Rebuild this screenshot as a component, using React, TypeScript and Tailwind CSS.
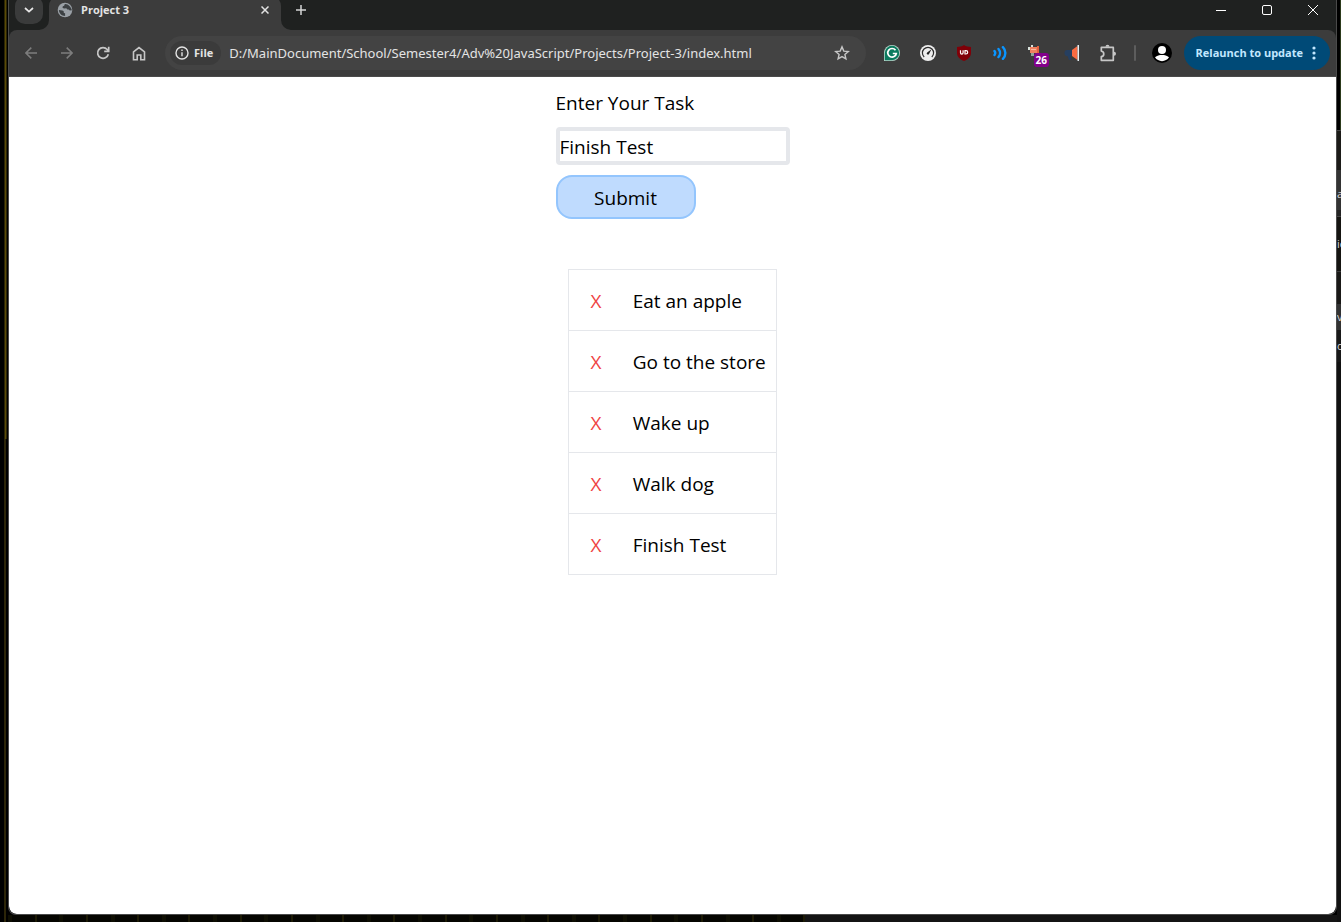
import React, { useState } from "react";
import type { FormEvent, ReactNode } from "react";

function ToolButton({ label, children }: { label: string; children: ReactNode }) {
  return (
    <button type="button" aria-label={label} className="flex h-9 w-9 shrink-0 items-center justify-center">
      {children}
    </button>
  );
}

function TabStrip() {
  return (
    <div className="-mt-1 flex h-[34px] items-start bg-[#1f2120] text-[#e3e3e3]">
      <button
        type="button"
        aria-label="Search tabs"
        className="ml-[6px] flex h-7 w-7 shrink-0 items-center justify-center rounded-[10px] bg-[#3a3b3b]"
      >
        <svg width="10" height="6" viewBox="0 0 10 6" fill="none" stroke="#e8e8e8" strokeWidth="1.7">
          <path d="M1 1l4 3.6L9 1" />
        </svg>
      </button>
      <div className="relative ml-[6px] h-[34px] w-[232px] shrink-0 rounded-t-[10px] bg-[#3c3c3c]">
        <svg className="absolute bottom-0 -left-[10px]" width="10" height="10" viewBox="0 0 10 10">
          <path d="M10 0v10H0A10 10 0 0 0 10 0z" fill="#3c3c3c" />
        </svg>
        <svg className="absolute bottom-0 -right-[10px]" width="10" height="10" viewBox="0 0 10 10">
          <path d="M0 0v10h10A10 10 0 0 1 0 0z" fill="#3c3c3c" />
        </svg>
        <div className="flex h-7 items-center pr-2 pl-2">
          <svg width="16" height="16" viewBox="0 0 16 16" className="shrink-0">
            <circle cx="8" cy="8" r="7.3" fill="#9aa0a6" />
            <path
              d="M1.9 8.1l3.4.3c1 .1 1.5.7 1.5 1.6v1l1.3.2v2.9C4.600 14 2 11.500 1.900 8.100zM8.300 1.900c-.8.400-1.200 1-1 1.800l-1.500.5-.3 1.600 1.500.6 2.300-.2 1.100 1.300 1.300.100 1.100 1 2.200-.3C14 4.800 11.600 2.100 8.300 1.900z"
              fill="#3c4043"
            />
          </svg>
          <span className="ml-2 flex-1 text-[11px] leading-4 font-bold">Project 3</span>
          <button type="button" aria-label="Close tab" className="flex h-4 w-4 items-center justify-center">
            <svg width="8" height="8" viewBox="0 0 8 8" stroke="#e3e3e3" strokeWidth="1.5">
              <path d="M.5.5l7 7M7.500.5l-7 7" />
            </svg>
          </button>
        </div>
      </div>
      <button type="button" aria-label="New tab" className="ml-[6px] flex h-7 w-7 items-center justify-center">
        <svg width="10" height="10" viewBox="0 0 10 10" stroke="#d5d5d5" strokeWidth="1.5">
          <path d="M5 0v10M0 5h10" />
        </svg>
      </button>
      <div className="ml-auto flex">
        <button type="button" aria-label="Minimize" className="flex h-7 w-[46px] items-center justify-center">
          <svg width="10" height="10" viewBox="0 0 10 10" stroke="#fff">
            <path d="M0 5.500h10" />
          </svg>
        </button>
        <button type="button" aria-label="Maximize" className="flex h-7 w-[46px] items-center justify-center">
          <svg width="10" height="10" viewBox="0 0 10 10" fill="none" stroke="#fff">
            <rect x=".5" y=".5" width="9" height="9" rx="1.500" />
          </svg>
        </button>
        <button type="button" aria-label="Close" className="flex h-7 w-[46px] items-center justify-center">
          <svg width="10" height="10" viewBox="0 0 10 10" stroke="#fff">
            <path d="M0 0l10 10M10 0L0 10" />
          </svg>
        </button>
      </div>
    </div>
  );
}

function Toolbar() {
  return (
    <div className="bg-[#1f2120]">
      <div className="flex h-[47px] items-center rounded-t-[8px] border-b border-[#4a4a4a] bg-[#3c3c3c] pr-[6px] pl-1">
        <ToolButton label="Back">
          <svg width="12" height="12" viewBox="0 0 12 12" fill="none" stroke="#7d7d7d" strokeWidth="1.500">
            <path d="M12 6H1M6.300.6L.9 6l5.400 5.400" />
          </svg>
        </ToolButton>
        <ToolButton label="Forward">
          <svg width="12" height="12" viewBox="0 0 12 12" fill="none" stroke="#7d7d7d" strokeWidth="1.500">
            <path d="M0 6h11M5.700.6L11.100 6l-5.400 5.400" />
          </svg>
        </ToolButton>
        <ToolButton label="Reload">
          <svg width="14" height="14" viewBox="0 0 14 14" fill="none" stroke="#c7c7c7" strokeWidth="1.700">
            <path d="M12.300 8.200A5.400 5.400 0 1 1 11.200 3.500L12.600 5M12.700.8v4.500H8.200" />
          </svg>
        </ToolButton>
        <ToolButton label="Home">
          <svg width="14" height="15" viewBox="0 0 14 15" fill="none" stroke="#c7c7c7" strokeWidth="1.600">
            <path d="M1.500 5.800L7 1.500l5.500 4.300v8H8.800V9H5.200v4.800H1.500z" />
          </svg>
        </ToolButton>
        <div className="ml-2 flex h-[34px] min-w-0 flex-1 items-center rounded-full bg-[#434343] pr-2 pl-[5px]">
          <button type="button" className="flex h-6 shrink-0 items-center rounded-full bg-[#3b3b3b] pr-2 pl-[5px] text-[#e3e3e3]">
            <svg width="14" height="14" viewBox="0 0 14 14" fill="none" stroke="#e3e3e3" strokeWidth="1.400">
              <circle cx="7" cy="7" r="6" />
              <path d="M7 6.200v4M7 3.600v1.500" />
            </svg>
            <span className="ml-[5px] text-[11px] leading-4 font-bold">File</span>
          </button>
          <input
            aria-label="Address"
            readOnly
            value="D:/MainDocument/School/Semester4/Adv%20JavaScript/Projects/Project-3/index.html"
            className="ml-2 h-6 min-w-0 flex-1 bg-transparent font-['Noto_Sans',sans-serif] text-[13px] leading-5 text-[#e3e3e3] outline-none"
          />
          <button type="button" aria-label="Bookmark" className="flex h-8 w-8 shrink-0 items-center justify-center">
            <svg width="16" height="16" viewBox="0 0 16 16" fill="none" stroke="#c7c7c7" strokeWidth="1.400">
              <path d="M8 1.900l1.800 4.200 4.500.4-3.400 3 1 4.400L8 11.600l-3.900 2.300 1-4.400-3.400-3 4.500-.4z" />
            </svg>
          </button>
        </div>
        <div className="ml-2 flex">
          <ToolButton label="Writing assistant">
            <svg width="16" height="16" viewBox="0 0 16 16">
              <path d="M8 0a8 8 0 0 1 0 16H0V8a8 8 0 0 1 8-8z" fill="#b8d8cd" />
              <path d="M8 .8a7.200 7.200 0 0 1 0 14.400H.8V8A7.200 7.200 0 0 1 8 .8z" fill="#0b7a5e" />
              <path d="M11.500 5.200A4.300 4.300 0 1 0 12.300 8.500H8.800" fill="none" stroke="#fff" strokeWidth="1.700" />
            </svg>
          </ToolButton>
          <ToolButton label="Speed gauge">
            <svg width="16" height="16" viewBox="0 0 16 16">
              <circle cx="8" cy="8" r="8" fill="#eee" />
              <path d="M4.200 12a5.600 5.600 0 1 1 7.600 0" fill="none" stroke="#2c2c2c" strokeWidth="1.200" />
              <path d="M11.500 4.200L9 9a1.200 1.200 0 1 1-1.800-1.500z" fill="#222" />
            </svg>
          </ToolButton>
          <ToolButton label="Content blocker">
            <svg width="14" height="16" viewBox="0 0 14 16">
              <path d="M7 0c2 1.500 4.500 1.900 7 1.900V8c0 4-3.500 6.600-7 8C3.500 14.600 0 12 0 8V1.900C2.500 1.900 5 1.500 7 0z" fill="#800008" />
              <path d="M3.500 5.300v2.500a1.300 1.300 0 0 0 2.600 0V5.300" fill="none" stroke="#fff" strokeWidth="1.200" />
              <path d="M8 5.600h1a1.700 1.700 0 0 1 0 3.400H8z" fill="none" stroke="#fff" strokeWidth="1.200" />
            </svg>
          </ToolButton>
          <ToolButton label="Read aloud">
            <svg width="14" height="14" viewBox="0 0 14 14" fill="none" stroke="#0a95ff" strokeWidth="2.400" strokeLinecap="round">
              <path d="M1.500 5c.9 1.200.9 2.800 0 4M5.500 2.900c2 2.400 2 5.800 0 8.200M9.900 1.200c3.300 3.400 3.300 8.200 0 11.600" />
            </svg>
          </ToolButton>
          <ToolButton label="Announcements, 26 new">
            <span className="relative block h-4 w-4">
              <svg width="16" height="16" viewBox="0 0 16 16">
                <path d="M2 2h9v6H2z" fill="#f0805f" />
                <path d="M0 2h2v3H0zM3 0h2v2H3z" fill="#d9e2dc" />
                <path d="M3 4h5v1H3z" fill="#f9b9a0" />
                <path d="M9 1h2v7H9z" fill="#e2613f" />
                <path d="M3 8h3v3H3z" fill="#8fa39b" />
              </svg>
              <span className="absolute top-2 left-[6px] rounded-[3px] bg-[#83008b] px-[2px] text-[10px] leading-[14px] font-bold text-white">
                26
              </span>
            </span>
          </ToolButton>
          <ToolButton label="Megaphone">
            <svg width="16" height="16" viewBox="0 0 16 16">
              <path d="M3 5h5v6H6.500l1 4H5l-1.500-4H3a2.500 3 0 0 1 0-6z" fill="#263f60" />
              <path d="M8 5L13.500 1v14L8 11z" fill="#fa6b43" />
              <path d="M13.500 0H15v16h-1.500z" fill="#e6eef2" />
            </svg>
          </ToolButton>
          <ToolButton label="Extensions">
            <svg width="18" height="18" viewBox="0 0 18 18">
              <path d="M2.300 3.400h12v12.900h-12v-3.600c3.300-.5 3.300-5.100 0-5.600z" fill="none" stroke="#c7c7c7" strokeWidth="1.700" strokeLinejoin="round" />
              <path d="M6.500 2.800a2 2 0 0 1 4 0zM15 7.800a2 2 0 0 1 0 4z" fill="#c7c7c7" />
            </svg>
          </ToolButton>
        </div>
        <div className="mx-2 h-4 w-[2px] shrink-0 rounded-full bg-[#5d5d5d]" />
        <ToolButton label="Profile">
          <svg width="20" height="20" viewBox="0 0 20 20">
            <circle cx="10" cy="10" r="10" fill="#000" />
            <circle cx="10" cy="6.900" r="4" fill="#fff" />
            <path d="M3 14.200C5 12.600 7.300 12 10 12s5 .6 7 2.200a8.200 8.200 0 0 1-14 0z" fill="#fff" />
          </svg>
        </ToolButton>
        <button
          type="button"
          className="ml-1 flex h-[34px] shrink-0 items-center rounded-full bg-[#004a77] pr-[14px] pl-3 text-[11px] leading-4 font-bold text-[#c2e7ff]"
        >
          Relaunch to update
          <svg width="4" height="14" viewBox="0 0 4 14" fill="#c2e7ff" className="ml-[9px]">
            <circle cx="2" cy="2" r="1.600" />
            <circle cx="2" cy="7" r="1.600" />
            <circle cx="2" cy="12" r="1.600" />
          </svg>
        </button>
      </div>
    </div>
  );
}

function TaskPage() {
  const [task, setTask] = useState("Finish Test");
  const [tasks, setTasks] = useState(["Eat an apple", "Go to the store", "Wake up", "Walk dog", "Finish Test"]);

  const addTask = (event: FormEvent) => {
    event.preventDefault();
    if (task.trim()) setTasks([...tasks, task.trim()]);
  };

  return (
    <main className="flex flex-1 flex-col items-center rounded-b-[8px] bg-white pt-3 text-[19px] leading-7 text-black">
      <form onSubmit={addTask} className="flex w-[234px] flex-col items-start">
        <label htmlFor="task">Enter Your Task</label>
        <input
          id="task"
          value={task}
          onChange={(event) => setTask(event.target.value)}
          className="mt-[10px] h-[38px] w-full rounded-[4px] border-4 border-[#e5e7eb] pt-[2px] outline-none"
        />
        <button
          type="submit"
          className="mt-[10px] h-11 w-[140px] rounded-2xl border-2 border-[#93c5fd] bg-[#bfdbfe] pt-[2px]"
        >
          Submit
        </button>
      </form>
      <table className="mt-[50px] border-collapse">
        <tbody>
          {tasks.map((name, index) => (
            <tr key={index} className="h-[61px] border border-[#e5e7eb]">
              <td className="w-[54px] px-0 pt-[2px] pb-0 text-center">
                <button
                  type="button"
                  aria-label={"Remove " + name}
                  onClick={() => setTasks(tasks.filter((_, i) => i !== index))}
                  className="text-[#ef4444]"
                >
                  X
                </button>
              </td>
              <td className="px-[10px] pt-[2px] pb-0">{name}</td>
            </tr>
          ))}
        </tbody>
      </table>
    </main>
  );
}

function BackgroundWindow() {
  return (
    <div aria-hidden="true" className="flex w-1 shrink-0 flex-col overflow-hidden bg-[#111] text-[11px] leading-4 text-[#ddd]">
      <div className="h-[130px] border-r border-[#2c3a1c] bg-black" />
      <div className="h-10 border-t border-[#444] bg-[#1c1b18]" />
      <div className="flex h-10 items-center bg-[#333] pt-2">a</div>
      <div className="h-[7px] border-b border-[#444] bg-[#242424]" />
      <div className="flex h-[55px] items-center border-b border-[#3c3c3c] bg-[#151411]">ic</div>
      <div className="h-8 bg-[#1a1917]" />
      <div className="flex h-[26px] items-center bg-[#333]">v</div>
      <div className="flex h-8 items-center bg-[#181818]">o</div>
    </div>
  );
}

export default function App() {
  return (
    <div className="flex min-h-screen overflow-hidden bg-black font-['Open_Sans','Noto_Sans',sans-serif]">
      <div aria-hidden="true" className="flex w-2 shrink-0 flex-col pl-1">
        <div className="h-[439px] w-[3px] border-x border-[#2c2606] bg-[#5a4a06]" />
        <div className="w-[2px] flex-1 bg-[#2c2508]" />
      </div>
      <div className="flex min-w-0 flex-1 flex-col">
        <div className="flex flex-1 flex-col overflow-hidden rounded-b-[8px] border-x border-b border-[#4a4a4a]">
          <TabStrip />
          <Toolbar />
          <TaskPage />
        </div>
        <div aria-hidden="true" className="flex h-[7px] shrink-0">
          <div className="flex w-3/5 justify-between bg-[#050500]">
            {Array.from({ length: 32 }, (_, i) => (
              <span key={i} className="w-[2px] bg-[#1c1a04] odd:w-1 odd:bg-[#0e0e02]" />
            ))}
          </div>
          <div className="flex-1 bg-[#141414]" />
        </div>
      </div>
      <BackgroundWindow />
    </div>
  );
}
